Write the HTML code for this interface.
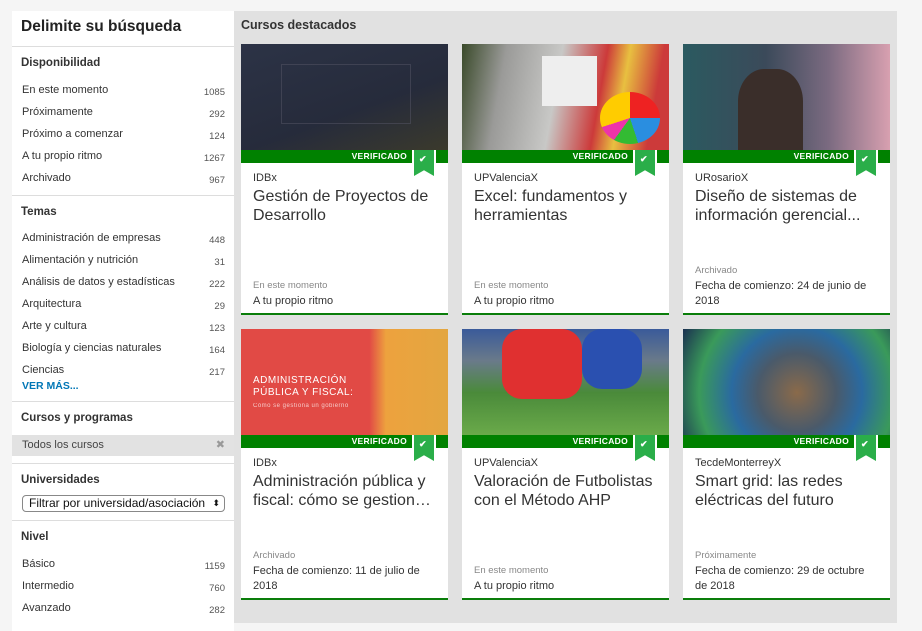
<!DOCTYPE html>
<html><head><meta charset="utf-8"><style>
*{margin:0;padding:0;box-sizing:border-box}
body{width:922px;height:623px;background:#f5f5f5;font-family:"Liberation Sans",sans-serif;color:#333;position:relative;overflow:hidden}
.side{position:absolute;left:12px;top:11px;width:222px;height:620px;background:#fff}
.side h1{font-size:15.5px;font-weight:bold;color:#222;padding:7px 9px 0;height:36px;border-bottom:1px solid #ddd}
.sec{border-bottom:1px solid #ddd;padding-bottom:5px}
.side h2{font-size:11.5px;font-weight:bold;color:#333;padding:9px 9px 0;height:33px}
.row{display:flex;justify-content:space-between;font-size:11px;padding:0 9px 0 10px;height:22px;line-height:20px;color:#333}
.row span:last-child{font-size:9.5px;color:#555;padding-top:3px}
.main{position:absolute;left:234px;top:11px;width:663px;height:612px;background:#e1e1e1}
.main h3{position:absolute;left:7px;top:7px;font-size:12.5px;font-weight:bold;color:#333}
.card{position:absolute;width:207px;background:#fff;border-bottom:2px solid #0a7d0a}
.img{height:106px;position:relative;overflow:hidden}
.bar{height:13px;background:#008100;position:relative;color:#fff;font-size:8.5px;font-weight:bold;text-align:right;padding-right:41px;line-height:13px;letter-spacing:.3px}
.rib{position:absolute;right:12px;top:0;width:24px;height:28px;background:#fff}
.rib i{position:absolute;left:2px;top:0;width:20px;height:26px;background:#2aae49;clip-path:polygon(0 0,100% 0,100% 100%,50% 78%,0 100%)}
.rib b{position:absolute;left:7px;top:3px;color:#fff;font-size:9px}
.org{font-size:11px;padding:9px 12px 0;color:#333}
.tt{font-size:16px;margin:3px 12px 0;line-height:19px;color:#333;display:-webkit-box;-webkit-line-clamp:2;-webkit-box-orient:vertical;overflow:hidden}
.foot{position:absolute;left:12px;right:14px;bottom:4px;font-size:11px;line-height:15px}
.foot small{display:block;font-size:9.5px;color:#888;margin-bottom:1px}
</style></head><body>
<div class="side">
<h1>Delimite su búsqueda</h1>
<div class="sec"><h2 style="padding-top:10px">Disponibilidad</h2>
<div class="row"><span>En este momento</span><span>1085</span></div>
<div class="row"><span>Próximamente</span><span>292</span></div>
<div class="row"><span>Próximo a comenzar</span><span>124</span></div>
<div class="row"><span>A tu propio ritmo</span><span>1267</span></div>
<div class="row"><span>Archivado</span><span>967</span></div></div>
<div class="sec"><h2 style="padding-top:10px;height:32px">Temas</h2>
<div class="row"><span>Administración de empresas</span><span>448</span></div>
<div class="row"><span>Alimentación y nutrición</span><span>31</span></div>
<div class="row"><span>Análisis de datos y estadísticas</span><span>222</span></div>
<div class="row"><span>Arquitectura</span><span>29</span></div>
<div class="row"><span>Arte y cultura</span><span>123</span></div>
<div class="row"><span>Biología y ciencias naturales</span><span>164</span></div>
<div class="row" style="height:20px"><span>Ciencias</span><span>217</span></div>
<div style="font-size:10.5px;font-weight:bold;color:#0076b6;padding:0 10px;height:16px">VER MÁS...</div></div>
<div style="border-bottom:1px solid #ddd;padding-bottom:7px"><h2 style="padding-top:10px;height:33px">Cursos y programas</h2>
<div style="background:#e2e2e2;height:21px;font-size:11px;line-height:21px;padding:0 9px 0 10px;display:flex;justify-content:space-between;color:#444"><span>Todos los cursos</span><span style="color:#999">✖</span></div></div>
<div class="sec" style="padding-bottom:8px"><h2 style="padding-top:10px;height:31px">Universidades</h2>
<div style="margin:0 9px 0 10px;height:17px;border:1px solid #888;border-radius:4px;font-size:12px;line-height:15px;padding-left:6px;color:#111;display:flex;justify-content:space-between;padding-right:4px"><span>Filtrar por universidad/asociación</span><span style="font-size:9px">⬍</span></div></div>
<div><h2 style="padding-top:10px;height:33px">Nivel</h2>
<div class="row"><span>Básico</span><span>1159</span></div>
<div class="row"><span>Intermedio</span><span>760</span></div>
<div class="row"><span>Avanzado</span><span>282</span></div></div>
</div>
<div class="main"><h3>Cursos destacados</h3></div>

<div class="card" style="left:241px;top:44px;height:271px">
<div class="img" style="background:linear-gradient(160deg,#2c3346,#262b3b 60%,#3b3a2c)"><div style="position:absolute;left:40px;top:20px;width:130px;height:60px;border:1px solid #556;opacity:.5"></div></div>
<div class="bar">VERIFICADO<div class="rib"><i></i><b>✔</b></div></div>
<div class="org">IDBx</div><div class="tt">Gestión de Proyectos de Desarrollo</div>
<div class="foot"><small>En este momento</small>A tu propio ritmo</div></div>

<div class="card" style="left:462px;top:44px;height:271px">
<div class="img" style="background:linear-gradient(100deg,#3a4a2a 0,#9a9a98 20%,#c8c8c6 45%,#cc3a3a 65%,#e8c040 75%,#cc3a3a 90%)"><div style="position:absolute;left:80px;top:12px;width:55px;height:50px;background:#eee"></div><div style="position:absolute;left:138px;top:48px;width:60px;height:52px;border-radius:50%;background:conic-gradient(#e22 0 25%,#2a8ee0 0 45%,#3b3 0 60%,#e3a 0 70%,#fc0 0)"></div></div>
<div class="bar">VERIFICADO<div class="rib"><i></i><b>✔</b></div></div>
<div class="org">UPValenciaX</div><div class="tt">Excel: fundamentos y herramientas</div>
<div class="foot"><small>En este momento</small>A tu propio ritmo</div></div>

<div class="card" style="left:683px;top:44px;height:271px">
<div class="img" style="background:linear-gradient(90deg,#2b5a60,#3b4a5a 40%,#7a6a80 70%,#d8a0b0)"><div style="position:absolute;left:55px;top:25px;width:65px;height:81px;border-radius:40% 40% 0 0;background:#3a2e2a"></div></div>
<div class="bar">VERIFICADO<div class="rib"><i></i><b>✔</b></div></div>
<div class="org">URosarioX</div><div class="tt">Diseño de sistemas de información gerencial...</div>
<div class="foot"><small>Archivado</small>Fecha de comienzo: 24 de junio de 2018</div></div>

<div class="card" style="left:241px;top:329px;height:271px">
<div class="img" style="background:linear-gradient(90deg,#e14a45 0,#e14a45 62%,#eda23e 70%,#e3a640)"><div style="position:absolute;left:12px;top:46px;color:#fff;font-size:10px;line-height:12px;letter-spacing:.5px">ADMINISTRACIÓN<br>PÚBLICA Y FISCAL:<br><span style="font-size:6px;opacity:.7">Cómo se gestiona un gobierno</span></div></div>
<div class="bar">VERIFICADO<div class="rib"><i></i><b>✔</b></div></div>
<div class="org">IDBx</div><div class="tt">Administración pública y fiscal: cómo se gestiona un gobierno</div>
<div class="foot"><small>Archivado</small>Fecha de comienzo: 11 de julio de 2018</div></div>

<div class="card" style="left:462px;top:329px;height:271px">
<div class="img" style="background:linear-gradient(180deg,#3a5a9a 0,#6a7a8a 30%,#4a8a3a 60%,#6aaa4a)"><div style="position:absolute;left:40px;top:0;width:80px;height:70px;background:#e03030;border-radius:20px"></div><div style="position:absolute;left:120px;top:0;width:60px;height:60px;background:#2a50b0;border-radius:20px"></div></div>
<div class="bar">VERIFICADO<div class="rib"><i></i><b>✔</b></div></div>
<div class="org">UPValenciaX</div><div class="tt">Valoración de Futbolistas con el Método AHP</div>
<div class="foot"><small>En este momento</small>A tu propio ritmo</div></div>

<div class="card" style="left:683px;top:329px;height:271px">
<div class="img" style="background:radial-gradient(circle at 55% 60%,#8a6a4a 0,#4a5a6a 30%,#2a6aa0 50%,#3a9a5a 75%,#1a3050)"></div>
<div class="bar">VERIFICADO<div class="rib"><i></i><b>✔</b></div></div>
<div class="org">TecdeMonterreyX</div><div class="tt">Smart grid: las redes eléctricas del futuro</div>
<div class="foot"><small>Próximamente</small>Fecha de comienzo: 29 de octubre de 2018</div></div>
</body></html>
